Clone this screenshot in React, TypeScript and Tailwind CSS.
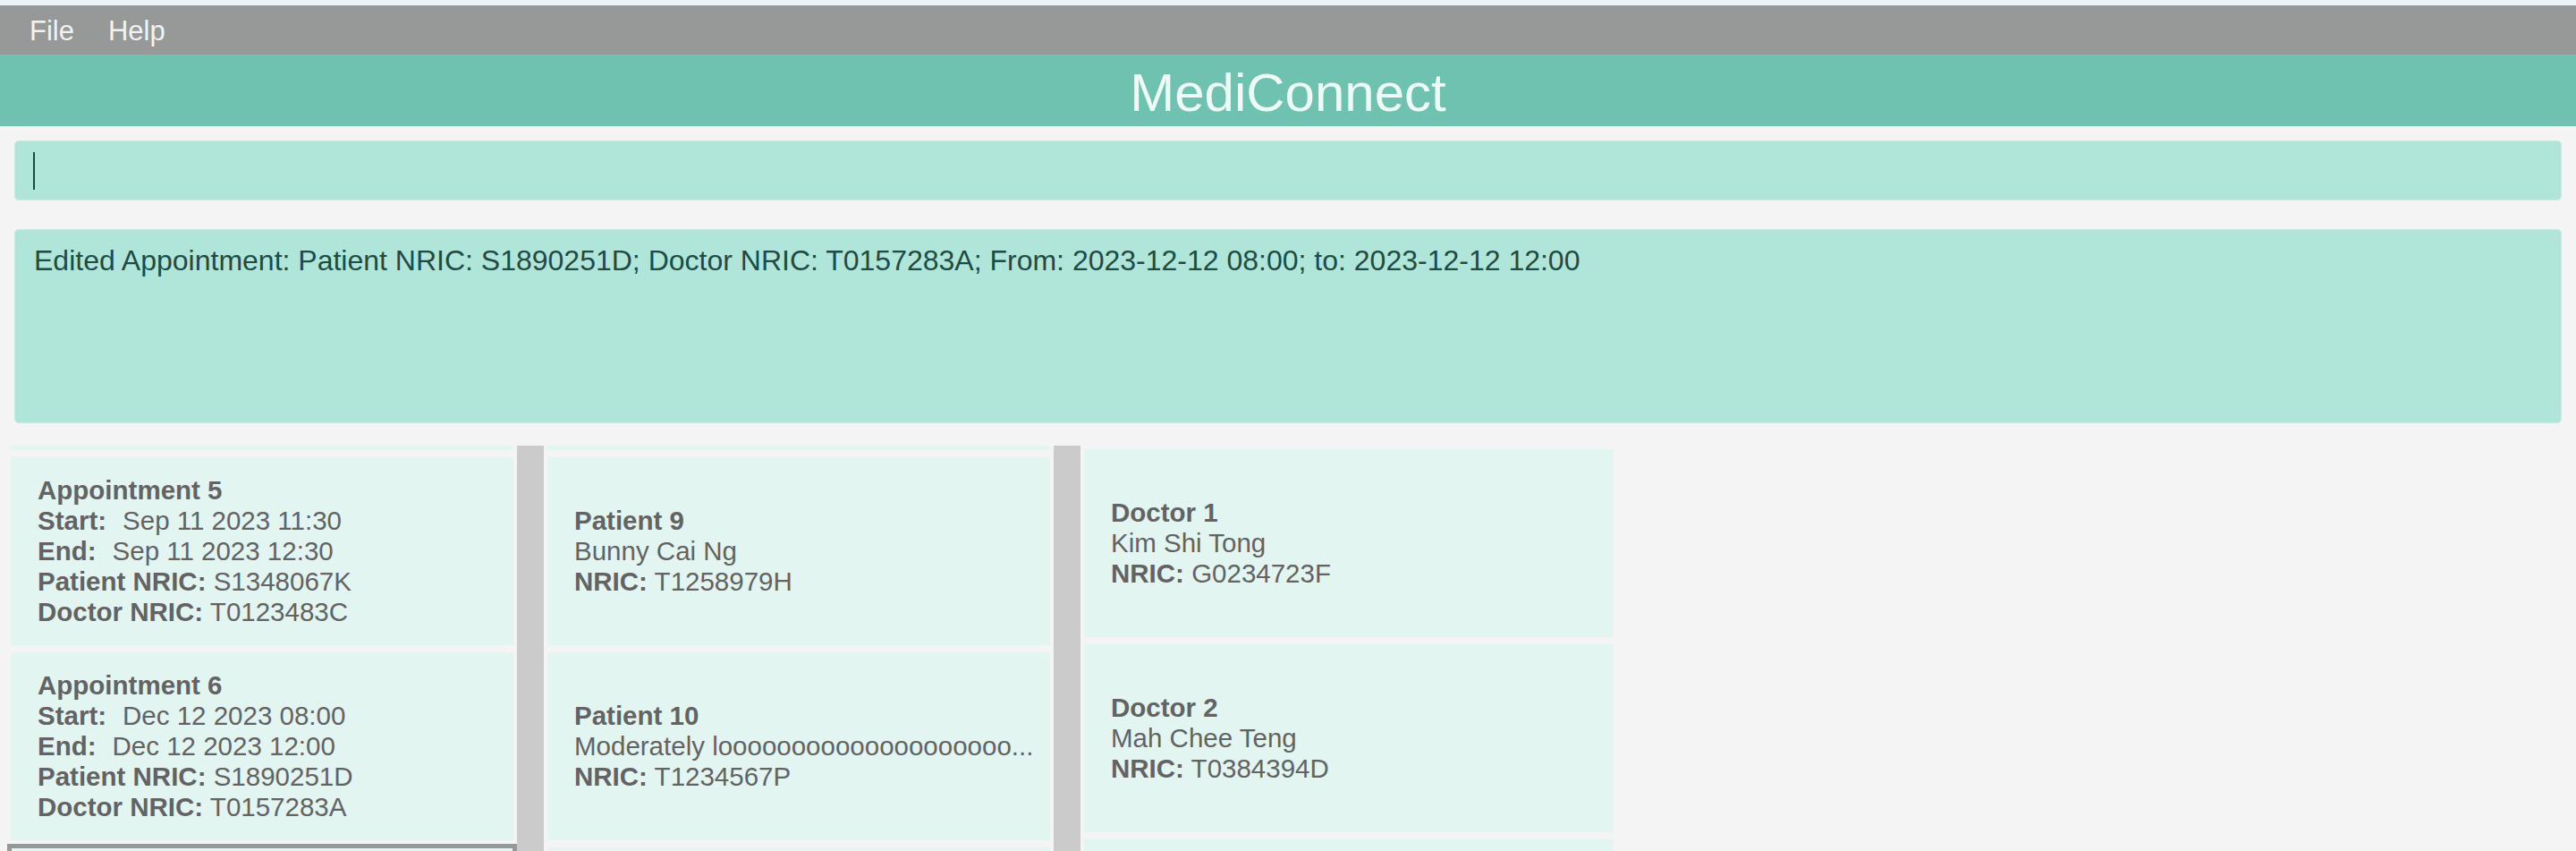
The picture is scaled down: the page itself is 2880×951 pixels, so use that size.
import React from "react";

const cardText = "text-[29.5px] leading-[34px] text-[#636363]";

function Cell({ children, selected }: { children?: React.ReactNode; selected?: boolean }) {
  if (selected) {
    return (
      <div className="shrink-0 border-[5px] border-[#979998]">
        <div className="h-[210px] bg-[#e2f5f1]" />
      </div>
    );
  }
  return (
    <div className="shrink-0 p-[4px]">
      <div className={`h-[210px] bg-[#e2f5f1] flex flex-col justify-center pl-[30px] pr-[8px] ${cardText}`}>
        {children}
      </div>
    </div>
  );
}

function Sliver() {
  return (
    <div className="shrink-0 h-[9px] px-[4px]">
      <div className="h-[5px] bg-[#e2f5f1]" />
    </div>
  );
}

function Appointment({ n, start, end, p, d }: { n: number; start: string; end: string; p: string; d: string }) {
  return (
    <Cell>
      <div className="font-bold whitespace-nowrap">Appointment {n}</div>
      <div className="whitespace-nowrap">
        <span className="font-bold">Start:</span>
        <span className="ml-[18px]">{start}</span>
      </div>
      <div className="whitespace-nowrap">
        <span className="font-bold">End:</span>
        <span className="ml-[18px]">{end}</span>
      </div>
      <div className="whitespace-nowrap">
        <span className="font-bold">Patient NRIC:</span> {p}
      </div>
      <div className="whitespace-nowrap">
        <span className="font-bold">Doctor NRIC:</span> {d}
      </div>
    </Cell>
  );
}

function Person({ title, name, nric }: { title: string; name: string; nric: string }) {
  return (
    <Cell>
      <div className="font-bold whitespace-nowrap">{title}</div>
      <div className="whitespace-nowrap">{name}</div>
      <div className="whitespace-nowrap">
        <span className="font-bold">NRIC:</span> {nric}
      </div>
    </Cell>
  );
}

const longName = "Moderately l" + "o".repeat(20) + "...";

export default function App() {
  return (
    <div className="w-[2880px] h-[951px] overflow-hidden bg-[#f4f4f4] flex flex-col font-['Liberation_Sans',Arial,sans-serif]">
      <div className="h-[6px] shrink-0 bg-[#ebf4f8]" />
      <div className="h-[55px] shrink-0 bg-[#969998] flex items-center gap-[38px] pl-[33px] pt-[3px] text-[31px] text-[#f2f2f2]">
        <span>File</span>
        <span>Help</span>
      </div>
      <div className="h-[80px] shrink-0 bg-[#6fc2b0] flex items-center justify-center pt-[5px] text-[60px] text-[#eefaf6]">
        MediConnect
      </div>
      <div className="mt-[16px] mx-[16px] h-[67px] shrink-0 rounded-[5px] border border-[#c6ebe2] bg-[#b0e5d9] pl-[20px] pt-[12px]">
        <div className="w-[2px] h-[42px] bg-[#1c4b44]" />
      </div>
      <div className="mt-[32px] mx-[16px] h-[217px] shrink-0 rounded-[5px] border border-[#c6ebe2] bg-[#b0e5d9] pl-[21px] pt-[10px] text-[32px] text-[#1f4b45]">
        Edited Appointment: Patient NRIC: S1890251D; Doctor NRIC: T0157283A; From: 2023-12-12 08:00; to: 2023-12-12 12:00
      </div>
      <div className="mt-[25px] flex-1 min-h-0 flex pl-[8px] overflow-hidden">
        <div className="w-[600px] flex">
          <div className="w-[570px] flex flex-col">
            <Sliver />
            <Appointment n={5} start="Sep 11 2023 11:30" end="Sep 11 2023 12:30" p="S1348067K" d="T0123483C" />
            <Appointment n={6} start="Dec 12 2023 08:00" end="Dec 12 2023 12:00" p="S1890251D" d="T0157283A" />
            <Cell selected />
          </div>
          <div className="w-[30px] bg-[#cbcbcb]" />
        </div>
        <div className="w-[600px] flex">
          <div className="w-[570px] flex flex-col">
            <Sliver />
            <Person title="Patient 9" name="Bunny Cai Ng" nric="T1258979H" />
            <Person title="Patient 10" name={longName} nric="T1234567P" />
            <Cell />
          </div>
          <div className="w-[30px] bg-[#cbcbcb]" />
        </div>
        <div className="w-[600px] flex flex-col">
          <Person title="Doctor 1" name="Kim Shi Tong" nric="G0234723F" />
          <Person title="Doctor 2" name="Mah Chee Teng" nric="T0384394D" />
          <Cell />
        </div>
      </div>
    </div>
  );
}
